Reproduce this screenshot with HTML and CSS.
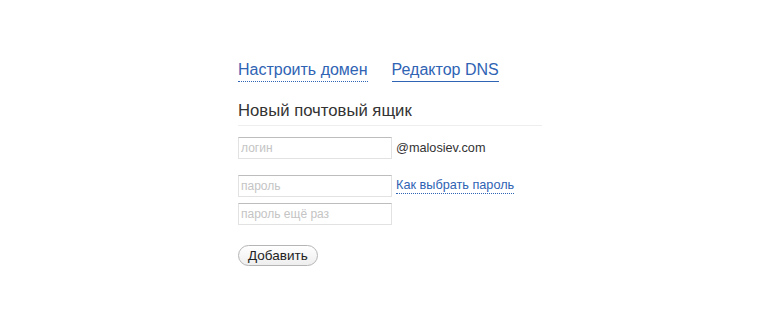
FILE: index.html
```html
<!DOCTYPE html>
<html lang="ru">
<head>
<meta charset="utf-8">
<link rel="stylesheet" href="styles.css">
</head>
<body>
<div class="page">
  <nav class="tabs">
    <a class="tab tab-dotted" href="#">Настроить домен</a>
    <a class="tab tab-solid" href="#">Редактор DNS</a>
  </nav>
  <h2 class="title">Новый почтовый ящик</h2>
  <form class="form">
    <div class="row">
      <input class="field" type="text" placeholder="логин">
      <span class="domain">@malosiev.com</span>
    </div>
    <div class="row row-pass">
      <input class="field" type="password" placeholder="пароль">
      <a class="help" href="#">Как выбрать пароль</a>
    </div>
    <div class="row row-repeat">
      <input class="field" type="password" placeholder="пароль ещё раз">
    </div>
    <button class="btn" type="button">Добавить</button>
  </form>
</div>
</body>
</html>
```

FILE: styles.css
```css
html, body {
  margin: 0;
  padding: 0;
  background: #ffffff;
}
body {
  font-family: "Liberation Sans", Arial, sans-serif;
  color: #222;
}
.page {
  width: 304px;
  padding: 60px 0 0 238px;
}
.tabs {
  display: flex;
  gap: 24px;
  height: 22px;
}
.tab {
  font-size: 16px;
  color: #2f63b4;
  text-decoration: none;
  line-height: 19px;
  padding-bottom: 1px;
}
.tab-dotted {
  border-bottom: 1px dotted #2f63b4;
}
.tab-solid {
  border-bottom: 1px solid #2f63b4;
}
.title {
  margin: 19px 0 0 0;
  font-size: 16.7px;
  font-weight: normal;
  color: #333;
  line-height: 20px;
  padding-bottom: 4px;
  border-bottom: 1px solid #eeeeee;
}
.form {
  margin-top: 11px;
}
.row {
  display: flex;
  align-items: center;
  gap: 4px;
}
.row-pass {
  margin-top: 16px;
}
.row-repeat {
  margin-top: 6px;
}
.field {
  box-sizing: border-box;
  width: 154px;
  height: 22px;
  margin: 0;
  padding: 2px 2px;
  border: 1px solid #e2e2e2;
  border-top-color: #bdbdbd;
  font-family: "Liberation Sans", Arial, sans-serif;
  font-size: 12px;
  color: #333;
  outline: none;
}
.field::placeholder {
  color: #c4c4c4;
}
.domain {
  font-size: 12.7px;
  color: #333;
}
.help {
  font-size: 12.7px;
  color: #2f63b4;
  text-decoration: none;
  border-bottom: 1px dotted #2f63b4;
  line-height: 15px;
}
.btn {
  margin-top: 20px;
  height: 21px;
  padding: 0 9px;
  border: 1px solid #b5b5b5;
  border-radius: 11px;
  background: linear-gradient(#ffffff, #eeeeee);
  font-family: "Liberation Sans", Arial, sans-serif;
  font-size: 13.5px;
  color: #222;
}
```
